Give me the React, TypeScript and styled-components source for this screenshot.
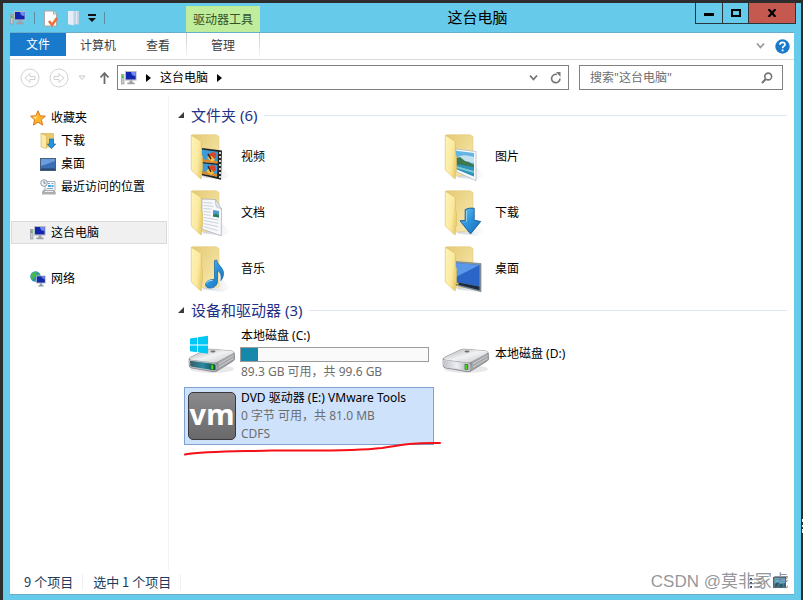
import React from "react";
import styled, { createGlobalStyle } from "styled-components";

const sans = `"Noto Sans", "Noto Sans CJK SC", sans-serif`;

const GlobalStyle = createGlobalStyle`
  *, *::before, *::after { box-sizing: border-box; }
  body { margin: 0; background: #2d2d2d; color: #000; font: 12px/18px ${sans}; }
  button, input { font: inherit; color: inherit; margin: 0; padding: 0; border: 0; background: none; }
  ul { list-style: none; margin: 0; padding: 0; }
  h1, h2 { margin: 0; font-weight: 400; }
  a { color: inherit; text-decoration: none; }
  svg { display: block; flex: none; }
`;

const Desktop = styled.div`
  position: relative;
  min-height: 100vh;
  padding: 3px 2px 0 3px;
  display: flex;
`;

const Frame = styled.div`
  flex: 1;
  min-width: 0;
  display: flex;
  flex-direction: column;
  background: #66caea;
  padding: 0 7px 6px;
`;

const TitleBar = styled.header`
  display: flex;
  height: 30px;
  margin-right: -2px;
`;

const QuickAccess = styled.div`
  width: 176px;
  display: flex;
  align-items: center;
  gap: 8px;
`;

const QuickButton = styled.button`
  display: flex;
`;

const QuickDivider = styled.span`
  width: 1px;
  height: 12px;
  background: #5b8ea3;
`;

const ContextLabel = styled.div`
  width: 74px;
  margin-top: 3px;
  background: #bfed9c;
  color: #35502a;
  text-align: center;
  line-height: 27px;
`;

const Title = styled.h1`
  flex: 1;
  font-size: 15px;
  line-height: 29px;
  text-align: center;
`;

const WindowButtons = styled.div`
  display: flex;
  height: 21px;
  border: 1px solid #29353a;
  border-top: 0;
`;

const WindowButton = styled.button<{ $close?: boolean }>`
  width: ${(p) => (p.$close ? 47 : 26)}px;
  display: flex;
  align-items: center;
  justify-content: center;
  background: ${(p) => (p.$close ? "#c5594f" : "transparent")};
  & + & { border-left: 1px solid #29353a; }
`;

const Client = styled.div`
  flex: 1;
  display: flex;
  flex-direction: column;
  background: #fff;
  box-shadow: 0 -1px #6aaccb, 0 1px #6aaccb;
`;

const Ribbon = styled.nav`
  display: flex;
  height: 27px;
  border-bottom: 1px solid #d9dadb;
`;

const Tab = styled.button<{ $width: number; $kind?: "file" | "context" }>`
  width: ${(p) => p.$width}px;
  height: ${(p) => (p.$kind === "file" ? 23 : 26)}px;
  color: ${(p) => (p.$kind === "file" ? "#fff" : "#3c3c3c")};
  background: ${(p) => (p.$kind === "file" ? "#1979ca" : "transparent")};
  ${(p) =>
    p.$kind === "context" &&
    `border: solid; border-width: 0 1px; border-image: linear-gradient(#c3c8ca, #fff) 1;`}
`;

const RibbonTools = styled.div`
  margin-left: auto;
  padding-right: 4px;
  display: flex;
  align-items: center;
  gap: 10px;
`;

const IconButton = styled.button`
  display: flex;
`;

const NavRow = styled.div`
  display: flex;
  align-items: center;
  height: 37px;
  padding: 0 11px 2px 10px;
`;

const History = styled.div`
  display: flex;
  align-items: center;
  gap: 9px;
  width: 97px;
`;

const Address = styled.div`
  flex: 1;
  min-width: 0;
  height: 25px;
  border: 1px solid #818181;
  display: flex;
  align-items: center;
  gap: 9px;
  padding: 0 6px 0 3px;
`;

const AddressTools = styled.div`
  display: flex;
  align-items: center;
  gap: 12px;
  margin-left: auto;
`;

const SearchBox = styled.label`
  width: 204px;
  height: 25px;
  margin-left: 10px;
  border: 1px solid #818181;
  display: flex;
  align-items: center;
  padding: 0 9px 0 10px;
`;

const SearchInput = styled.input`
  flex: 1;
  min-width: 0;
  outline: 0;
  &::placeholder { color: #6d6d6d; opacity: 1; }
`;

const Body = styled.div`
  flex: 1;
  display: flex;
`;

const Sidebar = styled.nav`
  width: 159px;
  padding: 9px 1px 0;
  border-right: 1px solid #f2f3f5;
  display: flex;
  flex-direction: column;
  gap: 23px;
`;

const SideLink = styled.a<{ $nested?: boolean; $current?: boolean }>`
  display: flex;
  align-items: center;
  gap: 5px;
  height: 23px;
  padding-left: ${(p) => (p.$nested ? 28 : 18)}px;
  border: 1px solid ${(p) => (p.$current ? "#dadada" : "transparent")};
  background: ${(p) => (p.$current ? "#f0f0f0" : "transparent")};
`;

const Main = styled.main`
  flex: 1;
  min-width: 0;
  padding: 7px 7px 0 9px;
`;

const SectionHeading = styled.h2`
  display: flex;
  align-items: center;
  gap: 7px;
  color: #1e3287;
  font-size: 15px;
  line-height: 22px;
  &::after {
    content: "";
    flex: 1;
    height: 1px;
    background: #dde7f5;
  }
`;

const Tiles = styled.div<{ $gap: number }>`
  display: grid;
  grid-template-columns: repeat(auto-fill, 250px);
  gap: ${(p) => p.$gap}px 4px;
  padding: ${(p) => (p.$gap ? "4px 0 0 6px" : "3px 0 2px 6px")};
`;

const Tile = styled.button<{ $height: number; $selected?: boolean }>`
  height: ${(p) => p.$height}px;
  display: flex;
  align-items: center;
  gap: 5px;
  padding: 0 3px;
  text-align: left;
  border: 1px solid ${(p) => (p.$selected ? "#7da2ce" : "transparent")};
  background: ${(p) => (p.$selected ? "#cfe2fc" : "transparent")};
`;

const TileText = styled.span`
  flex: 1;
  display: flex;
  flex-direction: column;
`;

const Detail = styled.span`
  color: #6d6d6d;
`;

const Capacity = styled.span`
  height: 15px;
  margin: 2px 1px 1px -1px;
  border: 1px solid #9c9c9c;
  background: #fafafa;
`;

const CapacityUsed = styled.span`
  display: block;
  height: 13px;
  background: #1689aa;
`;

const StatusBar = styled.footer`
  height: 24px;
  padding: 0 8px 0 14px;
  display: flex;
  align-items: center;
  font: 13px/16px "Noto Sans CJK SC", sans-serif;
  color: #1e395b;
`;

const StatusItem = styled.span`
  padding-right: 9px;
  margin-right: 10px;
  border-right: 1px solid #f0f0f0;
`;

const ViewButtons = styled.div`
  margin-left: auto;
  display: flex;
  gap: 10px;
`;

const Underline = styled.svg`
  position: absolute;
  left: 180px;
  top: 436px;
  pointer-events: none;
`;

const Watermark = styled.div`
  position: absolute;
  right: 14px;
  bottom: 6px;
  font: 17px/24px "Liberation Sans", "Noto Sans CJK SC", sans-serif;
  color: #777b80cc;
  pointer-events: none;
`;

const EdgeMark = styled.svg`
  position: absolute;
  right: 0;
  top: 517px;
`;

const PcIcon = () => (
  <svg width="16" height="16" viewBox="0 0 16 16">
    <rect x="0.5" y="4.5" width="2.5" height="9.5" fill="#c5cad0" stroke="#8a8f96" strokeWidth="0.6" />
    <rect x="1" y="5.5" width="1.5" height="2.5" fill="#35c43a" />
    <rect x="4" y="1" width="11.6" height="9.6" fill="#b8bcc2" />
    <rect x="5" y="2" width="9.6" height="7.4" fill="#1225ae" />
    <path d="M10 2h4.6v4C12 6 10.500 5 10 2z" fill="#718cf0" />
    <path d="M8.500 10.600h3v2h2.200v1.700H6.300v-1.700h2.200z" fill="#9da1a6" />
  </svg>
);

const StarIcon = () => (
  <svg width="16" height="16" viewBox="0 0 16 16">
    <path d="M8 .8l2.100 4.900 5.300.5-4 3.500 1.200 5.400L8 12.200l-4.600 2.900 1.200-5.400-4-3.500 5.300-.5z" fill="#fdb52c" stroke="#dc7719" strokeWidth="1" strokeLinejoin="round" />
    <path d="M8 2.800L6.500 6.500l-3.800.4L6 9.200z" fill="#ffe69c" />
  </svg>
);

const SmallDownloadIcon = () => (
  <svg width="16" height="16" viewBox="0 0 16 16">
    <path d="M1 .5h12.500V14H4z" fill="#e5ca70" stroke="#cfad4d" strokeWidth=".6" />
    <path d="M1 .5l5.500 2.200v13L1 13.800z" fill="#faeaa2" stroke="#d1b257" strokeWidth=".6" />
    <path d="M9.500 6h4v5h2.200l-4.200 4.700L7.300 11h2.200z" fill="#2893dd" stroke="#1267a8" strokeWidth=".7" />
  </svg>
);

const SmallDesktopIcon = () => (
  <svg width="16" height="16" viewBox="0 0 16 16">
    <rect x=".5" y="2.500" width="15" height="12" fill="#3d6fb4" stroke="#47607e" />
    <path d="M1 3h14v2L1 10z" fill="#6b9ddd" />
    <path d="M1 12.500h14V14H1z" fill="#26456f" />
  </svg>
);

const RecentIcon = () => (
  <svg width="16" height="16" viewBox="0 0 16 16">
    <path d="M5 2.500h10v9H5z" fill="#f5f8fa" stroke="#98a0a6" strokeWidth=".8" />
    <path d="M8 4.500h2M11.500 4.500h2M7 9.500h6" stroke="#89a3b8" />
    <path d="M8 6h3v2H8zM11.500 6h2v2h-2z" fill="#49a2dd" />
    <path d="M3.500 10.500L2 13v2.500h13.700V13l-1.500-1.500z" fill="#a9aeb2" />
    <path d="M5 12.500h8" stroke="#eceff1" />
    <circle cx="4" cy="4" r="3.300" fill="#eef3f6" stroke="#89949c" strokeWidth=".9" />
    <path d="M4 2v2.200h1.700" fill="none" stroke="#536877" strokeWidth=".8" />
  </svg>
);

const NetworkIcon = () => (
  <svg width="16" height="16" viewBox="0 0 16 16">
    <circle cx="5.500" cy="5.500" r="5.200" fill="#2d87d8" />
    <path d="M1 3.500C3 1 5 .5 7.500.8L6 3l1 1.500-3 2L2.500 9C.5 7.500.2 5.500 1 3.500zM8 2l2 2.500-2 .5zM4 8l2 1-1 1.600z" fill="#45bc49" />
    <rect x="6" y="4.500" width="9.700" height="8" fill="#b9c4ce" />
    <rect x="6.800" y="5.300" width="8.100" height="6.300" fill="#132ba6" />
    <path d="M11 5.300h3.900v3.200q-3-.4-3.900-3.200z" fill="#6986e7" />
    <path d="M9.800 12.500h2.400v1.800h1.500v1.200H8.300v-1.200h1.500z" fill="#8d969e" />
  </svg>
);

const FolderIcon = ({ id, children }: { id: string; children: React.ReactNode }) => (
  <svg width="48" height="48" viewBox="0 0 48 48">
    <defs>
      <linearGradient id={`${id}-front`} x1="0" x2="1" y1="0" y2="0.4">
        <stop offset="0" stopColor="#fef3b8" />
        <stop offset="0.7" stopColor="#fbe99e" />
        <stop offset="1" stopColor="#ecd072" />
      </linearGradient>
      <linearGradient id={`${id}-back`} x1="0" x2="1" y1="0" y2="1">
        <stop offset="0" stopColor="#e3c972" />
        <stop offset="0.5" stopColor="#efda93" />
        <stop offset="1" stopColor="#f9ecb8" />
      </linearGradient>
      <linearGradient id={`${id}-shade`} x1="0" x2="1" y1="0" y2="0">
        <stop offset="0" stopColor="#9a9a9a" stopOpacity=".5" />
        <stop offset="1" stopColor="#bbb" stopOpacity="0" />
      </linearGradient>
      <linearGradient id={`${id}-blue`} x1="0" x2="1" y1="0" y2="1">
        <stop offset="0" stopColor="#6fc3f1" />
        <stop offset="0.5" stopColor="#2a92dc" />
        <stop offset="1" stopColor="#1c69b5" />
      </linearGradient>
    </defs>
    <path d="M14 44l20 3 9-4-9-9z" fill={`url(#${id}-shade)`} />
    <path d="M3.500 2.500l1.500-.8h23l3 1.800v38.500l-17 .5z" fill={`url(#${id}-back)`} stroke="#e4cb7d" strokeWidth=".6" />
    {children}
    <path d="M3.200 2.200L12 7.500q1.500 1 1.500 3V22l1 1v14l-1 1.500V45q0 1.200-1.300.4L3.800 37.500q-.6-.6-.6-1.500z" fill={`url(#${id}-front)`} stroke="#d9bd62" strokeWidth=".6" />
  </svg>
);

const VideoIcon = () => (
  <FolderIcon id="video">
    <path d="M14 15l20 2.500-1 29.300-19-4.600z" fill="#252525" />
    <path d="M14 16.500l16 2.200-.4 11.800-15.600-1.500zM14 30.300l15.500 1.700-.4 11.800L14 40.800z" fill="#3a9bd6" />
    <path d="M14 26l15.500 2v2.500L14 29zM14 38l15 3v2.800l-15-3z" fill="#d98a2c" />
    <circle cx="25" cy="22.500" r="3.300" fill="#d7452b" />
    <circle cx="24.500" cy="35.500" r="3.300" fill="#d7452b" />
    <path d="M19 25q4-5 8 2l-3 2zM18 38q4-5 8 2l-3 2z" fill="#f4bf43" />
    <path d="M20 21l3 5M20 33l3 6" stroke="#3e2a20" strokeWidth="1.500" />
    <path d="M32 19v27" stroke="#e8e8e8" strokeWidth="1.800" strokeDasharray="2 2" />
  </FolderIcon>
);

const DocumentIcon = () => (
  <FolderIcon id="docs">
    <path d="M14 10l13.500.5q2 6 6 9.500L33.200 46.800 14 40z" fill="#f7f9fc" stroke="#a3abb3" strokeWidth=".7" />
    <path d="M27.500 10.500q-.5 5 1 7.500l5 2q-3-6-6-9.500z" fill="#dde4ea" stroke="#a3abb3" strokeWidth=".5" />
    <path d="M15.500 13.500l9 .7M15.500 16.500l10 .9M15.500 19.500l8 .7M15.500 22.500l7 .8M15.500 25.500l7 .9M15.500 28.500l15 2.500M15.500 31.500l15 2.800M15.500 34.500l14.500 3.200M15.500 37.500l14 4" stroke="#cbd1d7" strokeWidth="1" />
    <path d="M25 21l6 1v6.500l-6-1z" fill="#4b9ad2" />
    <path d="M25 26l3-1.500 3 2v2l-6-1z" fill="#2f7c57" />
  </FolderIcon>
);

const MusicIcon = () => (
  <FolderIcon id="music">
    <path d="M26.500 15.500l2.200-.4c.6 5 6.600 7 6.800 13.200 0 4-1.800 6-2.600 7.200.6-4.500-.2-8.500-3.400-10.200v10.500c.3 4.500-3.800 7.500-7.900 7.200-6.300-.5-5.500-8.700 4.900-8.600z" fill="url(#music-blue)" stroke="#1f6caa" strokeWidth=".8" />
    <path d="M18.500 38q2-3 6-2.700" stroke="#a4ddfa" fill="none" />
  </FolderIcon>
);

const PictureIcon = () => (
  <FolderIcon id="pics">
    <path d="M14 16l20 2.500v29.200L14 38.500z" fill="#f7fafc" stroke="#a3abb2" strokeWidth=".6" />
    <path d="M14 17.700l18 2.300v23.500L14 36z" fill="#64b5e5" />
    <path d="M14 25q6-5 18-1v6l-18-1z" fill="#bfe1f2" />
    <path d="M14 25l4-1 5 4 4 1 5 3v2H14z" fill="#3d7853" />
    <path d="M14 31l18 3v9.500L14 36z" fill="#2e94b9" />
    <path d="M14 33l18 5v2l-18-5z" fill="#7ecbd5" />
  </FolderIcon>
);

const DownloadIcon = () => (
  <FolderIcon id="down">
    <path d="M23.200 20.500q4-2 9-1.300v12l6.500 1.300L28.500 45 18 31.800l5.200-.4z" fill="url(#down-blue)" stroke="#155b94" strokeWidth=".9" strokeLinejoin="round" />
    <path d="M24.500 21.500V32.500" stroke="#a3defa" strokeWidth=".8" />
  </FolderIcon>
);

const DesktopFolderIcon = () => (
  <FolderIcon id="desk">
    <path d="M14 16.500l25 2v28.300l-25-6.600z" fill="#87939d" stroke="#6e7a84" strokeWidth=".6" />
    <path d="M14 18l23.500 2v21.500L14 37z" fill="#2b65c8" />
    <path d="M14 18l23.500 2L14 32z" fill="#5b98ea" />
    <path d="M14 37l23.500 4.500v3.700L14 39.300z" fill="#1c2d42" />
    <path d="M14 37.300l2.500.5v2l-2.500-.6z" fill="#e9c446" />
  </FolderIcon>
);

const DriveIcon = ({ system }: { system?: boolean }) => {
  const id = system ? "sys" : "data";
  return (
    <svg width="48" height="48" viewBox="0 0 48 48">
      <defs>
        <linearGradient id={`${id}-top`} x1="0" x2="1" y1="0" y2="1">
          <stop offset="0" stopColor="#a9abad" />
          <stop offset=".5" stopColor="#f1f2f3" />
          <stop offset="1" stopColor="#c4c6c8" />
        </linearGradient>
        <linearGradient id={`${id}-face`} x1="0" x2="1" y1="0" y2="0">
          <stop offset="0" stopColor={system ? "#3b5963" : "#bfc1c7"} />
          <stop offset=".5" stopColor={system ? "#2a8ba1" : "#eeeff4"} />
          <stop offset="1" stopColor={system ? "#164855" : "#a7a9af"} />
        </linearGradient>
      </defs>
      <ellipse cx="24" cy="39" rx="22" ry="4" fill="#000" opacity=".09" />
      <path d="M1 29.500Q1 28 3 27l15-7q2-1 5-.8l20 1.600q3 .4 3.300 2.200l.4 5.500q0 1.500-1.700 2.700L29 41q-1.500 1-4 .7L3.500 38Q1.500 37.500 1.200 36z" fill="#8c8e91" stroke="#77797c" strokeWidth=".6" />
      <path d="M1.500 28.800Q2 27.600 3.500 27L18 20q2-1 5-.8l20 1.600q4.500.7 1.700 3L30 31.500q-2 1.300-4.500 1L3 29.700z" fill={`url(#${id}-top)`} />
      <path d="M30 31.500L45.500 23l.7 5.500q0 1-1.500 2L29 40.500z" fill="#a3a5a8" />
      <path d="M31 34l14.500-8.500M31 37l14.500-8.500" stroke="#d7d8da" strokeWidth=".8" />
      <path d="M1.500 30.200L26 33.500q2 .3 2 2v3.800q0 1.700-2 1.500L4 37.200q-2-.4-2.200-2z" fill={`url(#${id}-face)`} stroke="#dfe0e2" strokeWidth=".7" />
      <rect x="23" y="34.500" width="2.600" height="5" fill="#40e512" stroke="#17680b" strokeWidth=".6" />
      <ellipse cx="25" cy="21.500" rx="2.500" ry="1" fill="#6d6f72" />
      {system && <path d="M2 8.500l7-1v7H2zM10 7.300l10-1.500v8.700H10zM2 15.500h7v6.800l-7-1zM10 15.500h10v8.200l-10-1.400z" fill="#00c8f5" />}
    </svg>
  );
};

const VmIcon = () => (
  <svg width="48" height="50" viewBox="0 0 48 50">
    <defs>
      <linearGradient id="vm-bg" x1="0" x2="0" y1="0" y2="1">
        <stop offset="0" stopColor="#8b8b8d" />
        <stop offset="1" stopColor="#68686b" />
      </linearGradient>
    </defs>
    <rect x=".5" y="1.500" width="47" height="47" rx="4.500" fill="url(#vm-bg)" stroke="#39393b" />
    <text x="24" y="34" textAnchor="middle" fontFamily="Noto Sans" fontWeight="700" fontSize="29" fill="#fff">vm</text>
  </svg>
);

const BackIcon = ({ forward }: { forward?: boolean }) => (
  <svg width="20" height="20" viewBox="0 0 20 20" fill="none" stroke="#d2d2d2">
    <circle cx="10" cy="10" r="9" />
    {forward ? <path d="M5 8.500h5V5.500l5 4.500-5 4.500v-3H5z" /> : <path d="M15 8.500h-5V5.500L5 10l5 4.500v-3h5z" />}
  </svg>
);

const CaretRight = () => (
  <svg width="5" height="8" viewBox="0 0 5 8"><path d="M0 0l5 4-5 4z" fill="#000" /></svg>
);

const Chevron = ({ color }: { color: string }) => (
  <svg width="9" height="8" viewBox="0 0 9 8"><path d="M1 1.500l3.500 4L8 1.500" fill="none" stroke={color} strokeWidth="1.800" /></svg>
);

const CollapseIcon = () => (
  <svg width="6" height="6" viewBox="0 0 6 6"><path d="M6 0v6H0z" fill="#3b3b3b" /></svg>
);

const sideGroups = [
  [
    { label: "收藏夹", icon: <StarIcon /> },
    { label: "下载", icon: <SmallDownloadIcon />, nested: true },
    { label: "桌面", icon: <SmallDesktopIcon />, nested: true },
    { label: "最近访问的位置", icon: <RecentIcon />, nested: true },
  ],
  [{ label: "这台电脑", icon: <PcIcon />, current: true }],
  [{ label: "网络", icon: <NetworkIcon /> }],
] as { label: string; icon: React.ReactNode; nested?: boolean; current?: boolean }[][];

const folders = [
  { label: "视频", icon: <VideoIcon /> },
  { label: "图片", icon: <PictureIcon /> },
  { label: "文档", icon: <DocumentIcon /> },
  { label: "下载", icon: <DownloadIcon /> },
  { label: "音乐", icon: <MusicIcon /> },
  { label: "桌面", icon: <DesktopFolderIcon /> },
];

const drives = [
  { label: "本地磁盘 (C:)", icon: <DriveIcon system />, used: 9, details: ["89.3 GB 可用，共 99.6 GB"] },
  { label: "本地磁盘 (D:)", icon: <DriveIcon />, details: [] },
  { label: "DVD 驱动器 (E:) VMware Tools", icon: <VmIcon />, details: ["0 字节 可用，共 81.0 MB", "CDFS"], selected: true },
] as { label: string; icon: React.ReactNode; used?: number; details: string[]; selected?: boolean }[];

export default function App() {
  return (
    <Desktop>
      <GlobalStyle />
      <Frame>
        <TitleBar>
          <QuickAccess>
            <QuickButton aria-label="系统菜单"><PcIcon /></QuickButton>
            <QuickDivider />
            <QuickButton aria-label="属性">
              <svg width="16" height="17" viewBox="0 0 16 17">
                <path d="M1.500 1h9l3 3v12h-12z" fill="#fff" stroke="#a6a6a6" />
                <path d="M10.500 1v3h3" fill="#eee" stroke="#a6a6a6" />
                <path d="M6 11l3 4 5-7" fill="none" stroke="#ec7038" strokeWidth="2.500" />
              </svg>
            </QuickButton>
            <QuickButton aria-label="新建文件夹">
              <svg width="13" height="16" viewBox="0 0 12 16">
                <path d="M.5 1h11v13.500H.500z" fill="#bcd3e8" />
                <path d="M.5 1H6v14.500L.500 14z" fill="#e5eef8" />
                <path d="M9 1v13" stroke="#dfeaf4" />
              </svg>
            </QuickButton>
            <QuickButton aria-label="自定义快速访问工具栏">
              <svg width="8" height="8" viewBox="0 0 8 8"><path d="M0 0h8v2H0zM0 4h8L4 8z" fill="#111" /></svg>
            </QuickButton>
            <QuickDivider />
          </QuickAccess>
          <ContextLabel>驱动器工具</ContextLabel>
          <Title>这台电脑</Title>
          <WindowButtons>
            <WindowButton aria-label="最小化">
              <svg width="10" height="10" viewBox="0 0 10 10"><path d="M0 5h10v3H0z" /></svg>
            </WindowButton>
            <WindowButton aria-label="最大化">
              <svg width="10" height="8" viewBox="0 0 10 8"><path d="M1 1h8v6H1z" fill="none" stroke="#000" strokeWidth="2" /></svg>
            </WindowButton>
            <WindowButton $close aria-label="关闭">
              <svg width="10" height="8" viewBox="0 0 10 8"><path d="M1.500 0l7 8M8.500 0l-7 8" stroke="#000" strokeWidth="2.200" /></svg>
            </WindowButton>
          </WindowButtons>
        </TitleBar>
        <Client>
          <Ribbon>
            <Tab $width={56} $kind="file">文件</Tab>
            <Tab $width={64}>计算机</Tab>
            <Tab $width={56}>查看</Tab>
            <Tab $width={74} $kind="context">管理</Tab>
            <RibbonTools>
              <IconButton aria-label="展开功能区"><Chevron color="#999" /></IconButton>
              <IconButton aria-label="帮助">
                <svg width="15" height="15" viewBox="0 0 15 15">
                  <circle cx="7.500" cy="7.500" r="7.200" fill="#1979ca" />
                  <path d="M5 5.700Q5 3.300 7.500 3.300T10 5.500Q10 6.800 8.700 7.300 7.600 7.900 7.600 9.300" fill="none" stroke="#fff" strokeWidth="1.700" />
                  <path d="M6.700 10.500h1.800v1.800H6.700z" fill="#fff" />
                </svg>
              </IconButton>
            </RibbonTools>
          </Ribbon>
          <NavRow>
            <History>
              <IconButton aria-label="后退"><BackIcon /></IconButton>
              <IconButton aria-label="前进"><BackIcon forward /></IconButton>
              <IconButton aria-label="最近浏览的位置">
                <svg width="8" height="6" viewBox="0 0 8 6"><path d="M1 1h6L4 4.500z" fill="none" stroke="#c9c9c9" /></svg>
              </IconButton>
              <IconButton aria-label="向上">
                <svg width="18" height="14" viewBox="0 0 18 14"><path d="M9.500 13V2.500M5.500 6.500l4-4.500 4 4.500" fill="none" stroke="#6c6c6c" strokeWidth="1.800" /></svg>
              </IconButton>
            </History>
            <Address>
              <PcIcon />
              <CaretRight />
              <IconButton>这台电脑</IconButton>
              <CaretRight />
              <AddressTools>
                <IconButton aria-label="历史地址"><Chevron color="#747474" /></IconButton>
                <IconButton aria-label="刷新">
                  <svg width="12" height="12" viewBox="0 0 12 12">
                    <path d="M10 6.500A4.200 4.200 0 1 1 7 2.400" fill="none" stroke="#777" strokeWidth="1.600" />
                    <path d="M6 0h4.500v5z" fill="#777" />
                  </svg>
                </IconButton>
              </AddressTools>
            </Address>
            <SearchBox>
              <SearchInput aria-label="搜索" placeholder={'搜索"这台电脑"'} />
              <svg width="12" height="12" viewBox="0 0 12 12">
                <circle cx="7.200" cy="4.500" r="3.400" fill="none" stroke="#747474" strokeWidth="1.600" />
                <path d="M4.800 7L1 11" stroke="#747474" strokeWidth="2" />
              </svg>
            </SearchBox>
          </NavRow>
          <Body>
            <Sidebar aria-label="导航窗格">
              {sideGroups.map((group) => (
                <ul key={group[0].label}>
                  {group.map((item) => (
                    <li key={item.label}>
                      <SideLink href="#" $nested={item.nested} $current={item.current}>
                        {item.icon}
                        {item.label}
                      </SideLink>
                    </li>
                  ))}
                </ul>
              ))}
            </Sidebar>
            <Main>
              <SectionHeading><CollapseIcon />文件夹 (6)</SectionHeading>
              <Tiles $gap={0}>
                {folders.map((folder) => (
                  <Tile key={folder.label} $height={56}>
                    {folder.icon}
                    <TileText>{folder.label}</TileText>
                  </Tile>
                ))}
              </Tiles>
              <SectionHeading><CollapseIcon />设备和驱动器 (3)</SectionHeading>
              <Tiles $gap={4}>
                {drives.map((drive) => (
                  <Tile key={drive.label} $height={58} $selected={drive.selected}>
                    {drive.icon}
                    <TileText>
                      <span>{drive.label}</span>
                      {drive.used !== undefined && (
                        <Capacity>
                          <CapacityUsed style={{ width: `${drive.used}%` }} />
                        </Capacity>
                      )}
                      {drive.details.map((line) => (
                        <Detail key={line}>{line}</Detail>
                      ))}
                    </TileText>
                  </Tile>
                ))}
              </Tiles>
            </Main>
          </Body>
          <StatusBar>
            <StatusItem>9 个项目</StatusItem>
            <StatusItem>选中 1 个项目</StatusItem>
            <ViewButtons>
              <IconButton aria-label="详细信息">
                <svg width="13" height="11" viewBox="0 0 13 11">
                  <path d="M0 1h2v2H0zM0 5h2v2H0zM0 9h2v2H0z" fill="#35607e" />
                  <path d="M4 2h8M4 6h8M4 10h8" stroke="#6b7780" />
                </svg>
              </IconButton>
              <IconButton aria-label="大图标">
                <svg width="13" height="11" viewBox="0 0 13 11">
                  <rect x=".5" y=".5" width="12" height="10" fill="#61b4dd" stroke="#47667c" />
                  <path d="M1 7l4-2 3 2 4-1v4H1z" fill="#245d74" />
                </svg>
              </IconButton>
            </ViewButtons>
          </StatusBar>
        </Client>
      </Frame>
      <Underline width="264" height="22" viewBox="0 0 264 22">
        <path d="M5 18.500C25 15 60 15.500 92 14.500c40 0 80 1 110-2.500 18-3 30-5.500 58-5" fill="none" stroke="#f50f16" strokeWidth="2" strokeLinecap="round" />
      </Underline>
      <EdgeMark width="2" height="18" viewBox="0 0 2 18">
        <path d="M1 2h1v3H1zM1 8h1v2H1zM1 12h1v4H1z" fill="#eee" />
      </EdgeMark>
      <Watermark>CSDN @莫非冢虎</Watermark>
    </Desktop>
  );
}
